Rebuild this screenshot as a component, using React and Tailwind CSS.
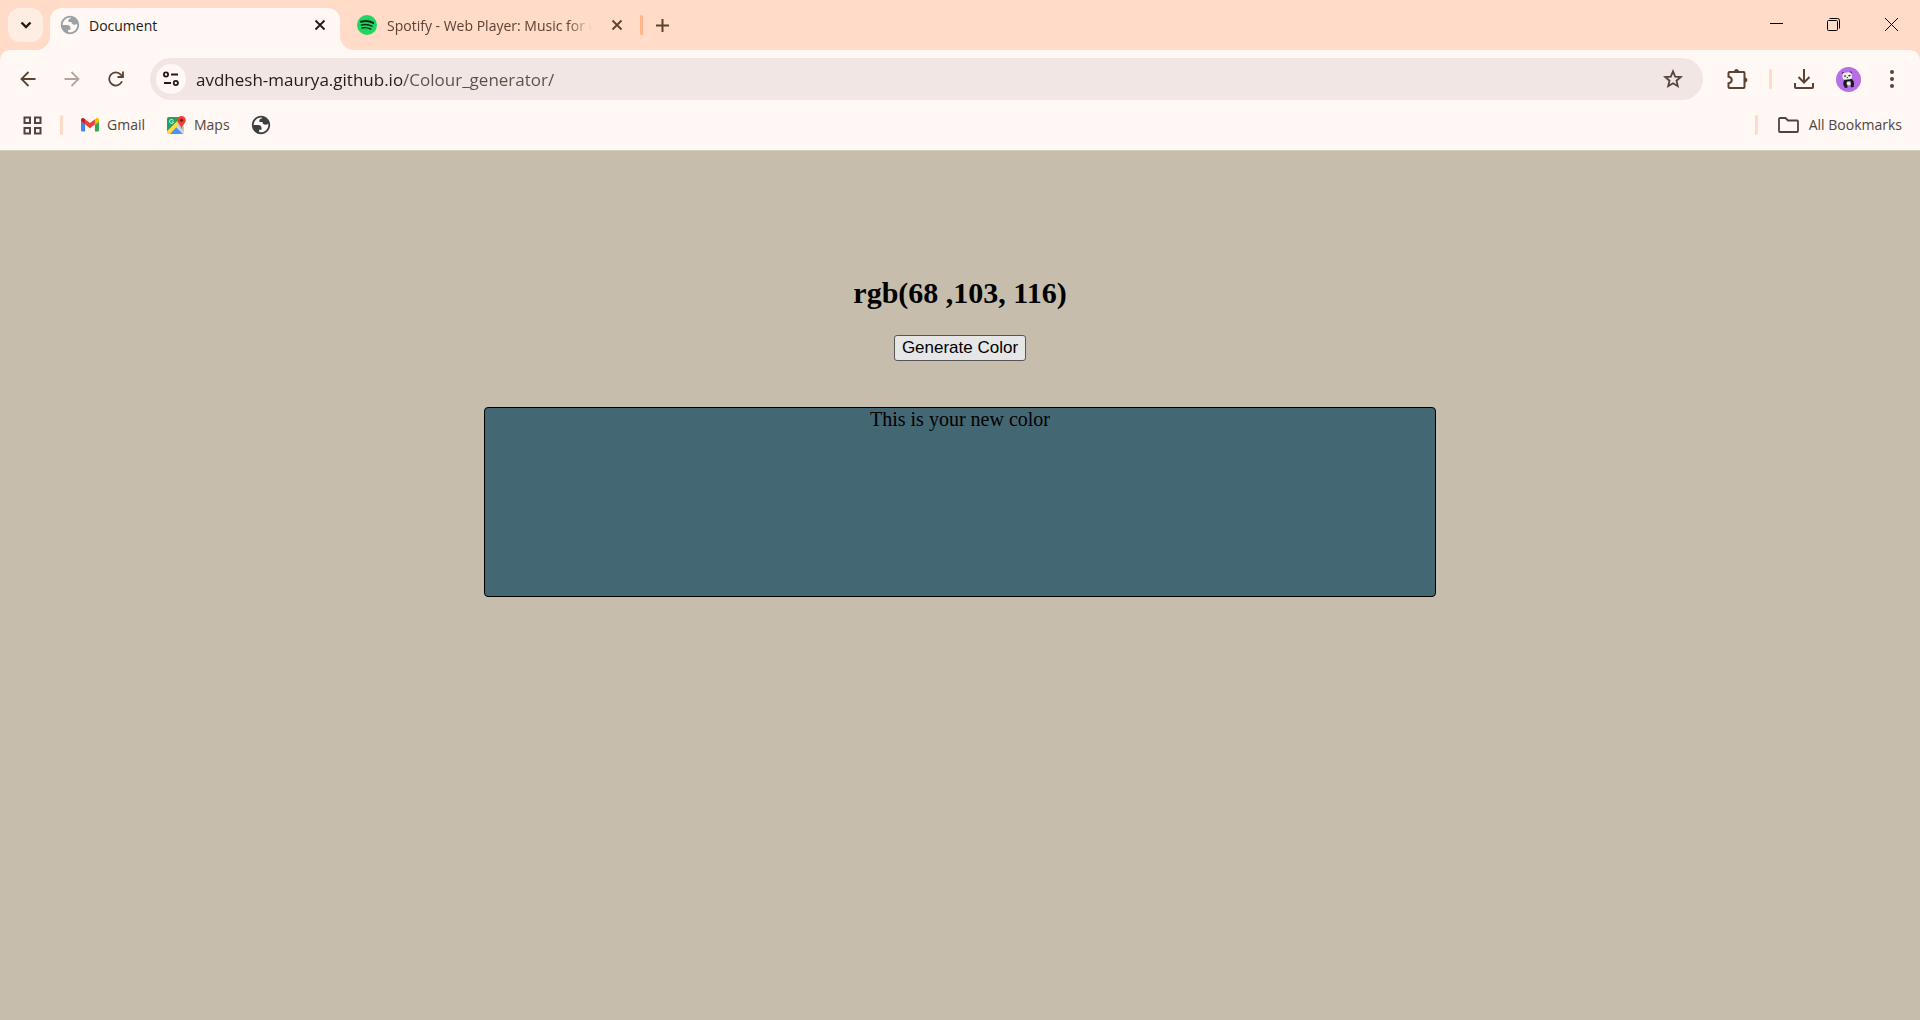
import React, { useState } from "react";

function Globe({ className }) {
  return (
    <svg viewBox="0 0 24 24" className={className} fill="currentColor" aria-hidden="true">
      <path d="M12 2C6.5 2 2 6.500 2 12s4.500 10 10 10 10-4.500 10-10S17.500 2 12 2zM4 12.100h4.400c3.400 0 4.700 1.700 4.100 5.200H10v2.400c.6.200 1.300.3 2 .3 4.400 0 8-3.600 8-8 0-.6-.1-1.200-.2-1.700-.4.900-1.300 1.300-2.700 1.300-2.300 0-3.500-.9-3.500-2.800h-3.400c-.3-2.600.5-3.900 2.600-3.900 0-.5.300-.8.700-1C8.500 3.300 4 7 4 12.100z" fillRule="evenodd" />
    </svg>
  );
}

function Spotify() {
  return (
    <svg viewBox="0 0 20 20" className="size-5 shrink-0" aria-hidden="true">
      <circle cx="10" cy="10" r="10" fill="#1ed760" />
      <g fill="none" stroke="#14281b" strokeLinecap="round">
        <path d="M4 6.700c4-1.200 8.500-.8 12.200 1.200" strokeWidth="2" />
        <path d="M4.500 10c3.500-1 7.200-.6 10.500 1.100" strokeWidth="1.600" />
        <path d="M5 13c3-.7 6-.3 8.800 1.100" strokeWidth="1.300" />
      </g>
    </svg>
  );
}

function Gmail() {
  return (
    <svg viewBox="52 42 88 66" className="w-[18px] shrink-0" aria-hidden="true">
      <path fill="#4285f4" d="M58 108h14V74L52 59v43c0 3.300 2.700 6 6 6" />
      <path fill="#34a853" d="M120 108h14c3.300 0 6-2.700 6-6V59l-20 15" />
      <path fill="#fbbc04" d="M120 48v26l20-15v-8c0-7.400-8.500-11.600-14.400-7.200" />
      <path fill="#ea4335" d="M72 74V48l24 18 24-18v26L96 92" />
      <path fill="#c5221f" d="M52 51v8l20 15V48l-5.600-4.200C60.500 39.400 52 43.600 52 51" />
    </svg>
  );
}

function Maps() {
  return (
    <svg viewBox="0 0 19 19" className="size-[19px] shrink-0" aria-hidden="true">
      <defs>
        <clipPath id="map-card">
          <rect x="0" y="1" width="17" height="17" rx="2" />
        </clipPath>
      </defs>
      <g clipPath="url(#map-card)">
        <rect y="1" width="17" height="17" fill="#d5dade" />
        <path d="M0 1h13v4L0 17z" fill="#1fa463" />
        <path d="M2 18l7-7 7 7z" fill="#5091f5" />
        <path d="M0 18v-3L13 2l2 3L3 18z" fill="#ffda45" />
        <path d="M0 13L12 1h2L0 15z" fill="#1fa463" />
        <path d="M10 9l7 7v-5l-4-4z" fill="#c3c8cc" />
      </g>
      <path d="M6.300 4.500A2 2 0 1 0 6.500 6H4.800" fill="none" stroke="#e7f5ec" strokeWidth="1" />
      <path d="M14.500 0a4.300 4.300 0 0 0-4.300 4.300c0 3.200 3.700 4.200 4.300 9.200.6-5 4.300-6 4.300-9.200A4.300 4.300 0 0 0 14.500 0z" fill="#ea4335" />
      <circle cx="14.500" cy="4.300" r="1.600" fill="#7d1f17" />
    </svg>
  );
}

function Panda() {
  return (
    <svg viewBox="0 0 25 25" className="size-[25px]" aria-hidden="true">
      <circle cx="12.500" cy="12.500" r="12.500" fill="#b66fe4" />
      <g transform="rotate(-6 12 12)">
        <circle cx="7.700" cy="6" r="1.200" fill="#1b1b1f" />
        <circle cx="15.300" cy="6" r="1.200" fill="#1b1b1f" />
        <path d="M9 12h6.500c2 1.500 2.500 4 1.700 6.500H7c-.6-2.500 0-5 2-6.500z" fill="#1b1b1f" />
        <rect x="6.700" y="5.500" width="9.500" height="7" rx="2.500" fill="#eeeef0" />
        <path d="M8.300 8.600l2 .3M12.800 8.900l2-.3M11 10.500h1" stroke="#1b1b1f" strokeWidth="1.200" />
        <path d="M10.500 14.500h3.500l.5 4h-4.500z" fill="#eeeef0" />
        <path d="M7.700 17.500h3v3h-3zM14 17.500h3v3h-3z" fill="#1b1b1f" />
      </g>
    </svg>
  );
}

function Line({ size = "size-5", box = "0 0 20 20", width = 2, children }) {
  return (
    <svg viewBox={box} className={size + " shrink-0"} fill="none" stroke="currentColor" strokeWidth={width} aria-hidden="true">
      {children}
    </svg>
  );
}

function IconButton({ label, className, children }) {
  return (
    <button type="button" aria-label={label} className={"flex h-9 shrink-0 items-center justify-center " + className}>
      {children}
    </button>
  );
}

function Cross() {
  return (
    <Line size="size-3" box="0 0 12 12" width={1.8}>
      <path d="M1.500 1.500l9 9M10.500 1.500l-9 9" />
    </Line>
  );
}

function TabStrip() {
  return (
    <header className="flex h-[50px] pl-2 text-[#221a15]">
      <button type="button" aria-label="Search tabs" className="mt-2 flex h-[34px] w-[35px] shrink-0 items-center justify-center rounded-xl bg-[#ffece2]">
        <Line size="h-2 w-3" box="0 0 12 8" width={2.4}>
          <path d="M1.500 1.500L6 6l4.500-4.500" />
        </Line>
      </button>
      <div className="relative mt-2 ml-[7px] flex w-[290px] shrink-0 items-center rounded-t-xl bg-[#fff8f5] pr-3 pb-2 pl-[11px]">
        <svg viewBox="0 0 14 14" className="absolute bottom-0 -left-3.5 size-3.5" aria-hidden="true">
          <path d="M14 0v14H0A14 14 0 0 0 14 0z" fill="#fff8f5" />
        </svg>
        <svg viewBox="0 0 14 14" className="absolute -right-3.5 bottom-0 size-3.5" aria-hidden="true">
          <path d="M0 0v14h14A14 14 0 0 1 0 0z" fill="#fff8f5" />
        </svg>
        <Globe className="size-[22px] -ml-0.5 shrink-0 text-[#9aa0a6]" />
        <span className="ml-2 flex-1 pt-0.5">Document</span>
        <IconButton label="Close tab" className="w-4"><Cross /></IconButton>
      </div>
      <div className="flex w-[300px] shrink-0 items-center pl-[17px] text-[#5b4232]">
        <Spotify />
        <span className="ml-2.5 w-[205px] shrink-0 overflow-hidden pt-0.5 whitespace-nowrap [mask-image:linear-gradient(to_right,black_180px,transparent_205px)]">
          Spotify - Web Player: Music for everyone
        </span>
        <IconButton label="Close tab" className="ml-[17px] w-4"><Cross /></IconButton>
        <span className="ml-[15px] h-5 w-[3px] shrink-0 rounded-full bg-[#ffb68b]" />
      </div>
      <IconButton label="New tab" className="mt-[7px] ml-1 w-9 text-[#5b4232]">
        <Line size="size-[13px]" box="0 0 13 13">
          <path d="M6.500 0v13M0 6.500h13" />
        </Line>
      </IconButton>
      <div className="ml-auto flex text-black">
        <IconButton label="Minimize" className="mt-1.5 w-14">
          <Line size="size-[13px]" box="0 0 13 13" width={1}><path d="M0 5.500h13" /></Line>
        </IconButton>
        <IconButton label="Restore" className="mt-1.5 w-[58px]">
          <Line size="size-[13px]" box="0 0 13 13" width={1}>
            <rect x=".5" y="2.500" width="10" height="10" rx="1" />
            <path d="M2.500 .5h8a2 2 0 0 1 2 2v8" />
          </Line>
        </IconButton>
        <IconButton label="Close window" className="mt-1.5 w-[58px]">
          <Line size="size-[13px]" box="0 0 13 13" width={1}><path d="M0 0l13 13M13 0L0 13" /></Line>
        </IconButton>
      </div>
    </header>
  );
}

function Toolbar() {
  return (
    <div className="flex h-[58px] items-center pr-1.5 pl-1.5 text-[#5b4232]">
      <IconButton label="Back" className="w-11">
        <Line size="size-4" box="0 0 16 16" width={1.8}><path d="M15.500 8H2M8.500 1L1.500 8l7 7" /></Line>
      </IconButton>
      <IconButton label="Forward" className="w-11 text-[#b3a69f]">
        <Line size="size-4" box="0 0 16 16" width={1.8}><path d="M.5 8H14M7.500 1l7 7-7 7" /></Line>
      </IconButton>
      <IconButton label="Reload" className="w-11">
        <Line size="size-4" box="0 0 16 16" width={1.8}>
          <path d="M14 10.300A6.600 6.600 0 1 1 12.800 3.600L14.800 5.600M15 .5v5.500H9.500" />
        </Line>
      </IconButton>
      <div className="ml-3 flex h-[42px] flex-1 items-center rounded-full bg-[#f1e6e3] pr-4 pl-1.5">
        <button type="button" aria-label="View site information" className="flex size-[30px] shrink-0 items-center justify-center rounded-full bg-[#fff8f5] text-[#221a15]">
          <Line size="size-4" box="0 0 16 16" width={1.8}>
            <circle cx="3" cy="3.500" r="2.100" />
            <circle cx="12.800" cy="12" r="2.100" />
            <path d="M8 3.500h7M1 12h7" />
          </Line>
        </button>
        <input
          type="text"
          aria-label="Address"
          spellCheck={false}
          defaultValue="avdhesh-maurya.github.io/Colour_generator/"
          className="ml-2.5 h-9 min-w-0 flex-1 bg-[linear-gradient(to_right,#221a15_206px,#5c4f48_206px)] bg-clip-text text-[17px] text-transparent outline-none"
        />
        <IconButton label="Bookmark this tab" className="w-7 text-[#52443c]">
          <Line size="size-5" box="0 0 20 20" width={1.8}>
            <path d="M10 2.300l2.200 5.300 5.600.4-4.300 3.700 1.300 5.500-4.800-2.900-4.800 2.900 1.300-5.500L2.200 8l5.600-.4z" />
          </Line>
        </IconButton>
      </div>
      <IconButton label="Extensions" className="ml-3 w-11">
        <Line size="size-[22px]" box="0 0 22 22">
          <path d="M3.500 4h14a1 1 0 0 1 1 1v14a1 1 0 0 1-1 1h-14a1 1 0 0 1-1-1v-3.700c2.200-.4 3.300-1.500 3.300-3.300S4.700 9.100 2.500 8.700V5a1 1 0 0 1 1-1z" />
          <path d="M8.500 3.500a2 2 0 0 1 4 0zM19 10v4a2 2 0 0 0 0-4z" fill="currentColor" strokeWidth="1" />
        </Line>
      </IconButton>
      <span className="ml-2.5 h-5 w-[3px] rounded-full bg-[#ffdbc8]" />
      <IconButton label="Downloads" className="ml-2.5 w-11">
        <Line size="size-[22px]" box="0 0 22 22">
          <path d="M11 1v13M5.500 9l5.500 5.500L16.500 9" />
          <path d="M2 15v4a1 1 0 0 0 1 1h16a1 1 0 0 0 1-1v-4" />
        </Line>
      </IconButton>
      <IconButton label="Profile" className="w-11"><Panda /></IconButton>
      <IconButton label="Menu" className="w-11">
        <svg viewBox="0 0 4 18" className="h-[18px] w-1" fill="currentColor" aria-hidden="true">
          <circle cx="2" cy="2" r="2" />
          <circle cx="2" cy="9" r="2" />
          <circle cx="2" cy="16" r="2" />
        </svg>
      </IconButton>
    </div>
  );
}

function BookmarksBar() {
  return (
    <nav aria-label="Bookmarks" className="flex h-[42px] items-center pr-[18px] pb-2 pl-[23px] text-[#52443c]">
      <button type="button" aria-label="Apps">
        <Line size="size-[19px]" box="0 0 19 19">
          <path d="M1.500 1.500h5.500v5.500h-5.500zM12 1.500h5.500v5.500h-5.500zM1.500 12h5.500v5.500h-5.500zM12 12h5.500v5.500h-5.500z" />
        </Line>
      </button>
      <span className="ml-[18px] h-5 w-[3px] rounded-full bg-[#ffdbc8]" />
      <a href="#gmail" className="ml-[18px] flex items-center gap-2"><Gmail />Gmail</a>
      <a href="#maps" className="ml-[22px] flex items-center gap-2"><Maps />Maps</a>
      <a href="#site" aria-label="Saved site" className="ml-5"><Globe className="size-[22px] text-[#3c4043]" /></a>
      <span className="ml-auto h-5 w-[3px] rounded-full bg-[#ffdbc8]" />
      <button type="button" className="ml-5 flex items-center gap-2.5">
        <Line size="h-4 w-[21px]" box="0 0 21 16" width={1.8}>
          <path d="M2 1h5.500l2.500 2.500h9a1 1 0 0 1 1 1V14a1 1 0 0 1-1 1H2a1 1 0 0 1-1-1V2a1 1 0 0 1 1-1z" />
        </Line>
        All Bookmarks
      </button>
    </nav>
  );
}

function ColorPage() {
  const [rgb, setRgb] = useState([68, 103, 116]);
  const generate = () => setRgb(rgb.map(() => Math.floor(Math.random() * 256)));
  return (
    <main className="flex flex-1 flex-col items-center border-t border-[#d9cbbb] bg-[#c7bdac] px-2.5 pt-[125px] text-black">
      <h1 className="font-['Liberation_Serif',serif] text-[30px] leading-[34px] font-bold">
        rgb({rgb[0]} ,{rgb[1]}, {rgb[2]})
      </h1>
      <button
        type="button"
        onClick={generate}
        className="mt-[25px] h-[26px] rounded-[3px] border border-[#555] bg-[#e6e6e6] px-[7px] font-['Liberation_Sans',sans-serif] text-[17px] leading-6"
      >
        Generate Color
      </button>
      <div
        className="mt-[46px] box-content h-[188px] w-1/2 rounded-[4px] border border-black text-center font-['Liberation_Serif',serif] text-xl leading-[22px]"
        style={{ backgroundColor: `rgb(${rgb.join(",")})` }}
      >
        This is your new color
      </div>
    </main>
  );
}

export default function App() {
  return (
    <div className="flex min-h-screen flex-col bg-[#ffdbc8] font-['Open_Sans',sans-serif] text-sm">
      <TabStrip />
      <div className="rounded-t-[10px] bg-[#fff8f5]">
        <Toolbar />
        <BookmarksBar />
      </div>
      <ColorPage />
    </div>
  );
}
